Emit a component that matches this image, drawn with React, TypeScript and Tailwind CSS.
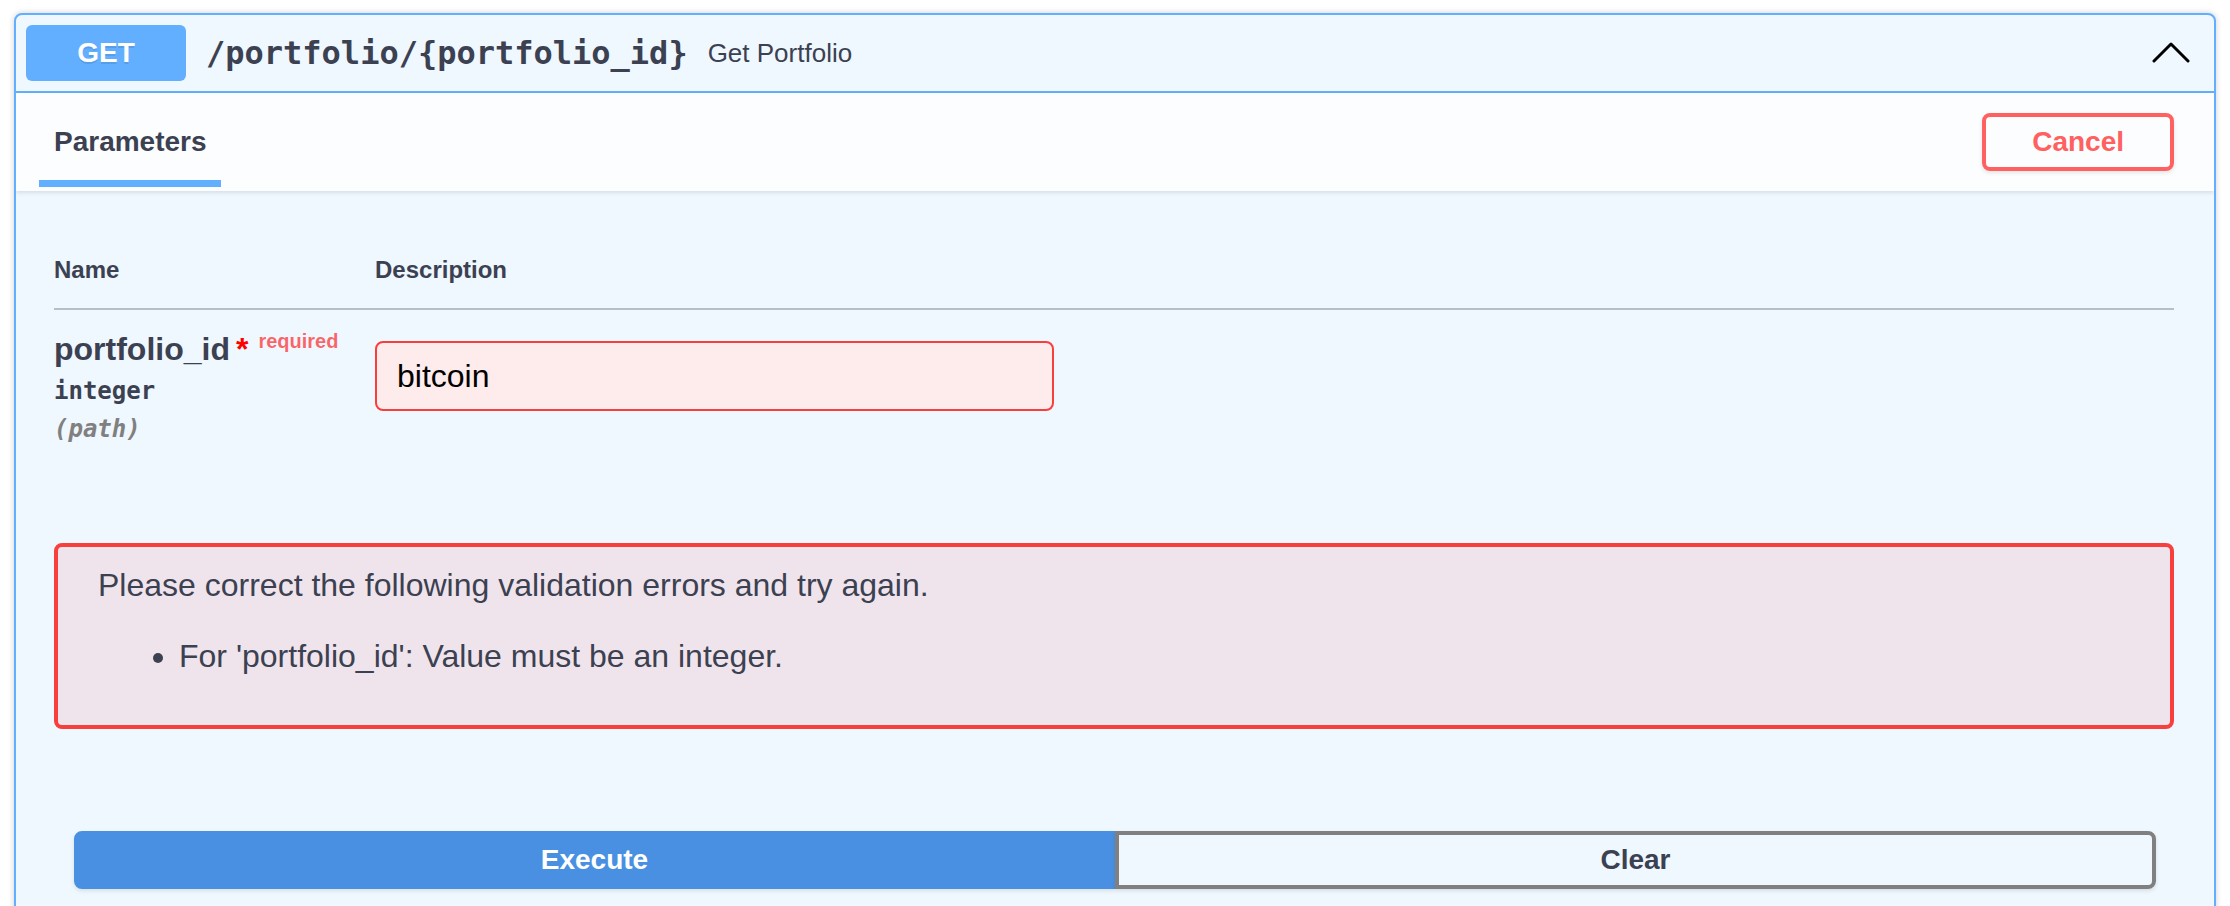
import React from "react";

const sans = { fontFamily: '"Liberation Sans", Arial, sans-serif' };
const mono = { fontFamily: '"DejaVu Sans Mono", "Liberation Mono", monospace' };

function ArrowUp() {
    return (
        <svg width="38" height="22" viewBox="0 0 38 22" aria-hidden="true">
            <polyline
                points="2,19 19,2 36,19"
                fill="none"
                stroke="#000"
                strokeWidth="3"
                strokeLinecap="round"
                strokeLinejoin="round"
            />
        </svg>
    );
}

export default function App() {
    return (
        <div className="min-h-screen bg-white px-[14px] pt-[13px] text-[#3b4151]" style={sans}>
            <div className="overflow-hidden rounded-[8px] border-2 border-[#61affe] bg-[#eff7ff] shadow-[0_0_6px_rgba(0,0,0,0.19)]">
                {/* Summary bar */}
                <div className="flex items-center border-b-2 border-[#61affe] p-[10px]">
                    <span className="flex h-[56px] w-[160px] items-center justify-center rounded-[6px] bg-[#61affe] text-[28px] font-bold text-white [text-shadow:0_2px_0_rgba(0,0,0,0.1)]">
                        GET
                    </span>
                    <span className="px-[20px] text-[32px] font-bold text-[#3b4151]" style={mono}>
                        /portfolio/{"{portfolio_id}"}
                    </span>
                    <span className="flex-1 text-[26px] text-[#3b4151]">Get Portfolio</span>
                    <span className="mr-[14px] flex items-center">
                        <ArrowUp />
                    </span>
                </div>

                {/* Section header */}
                <div className="relative flex h-[98px] items-center justify-between bg-white/80 pl-[38px] pr-[40px] shadow-[0_2px_4px_rgba(0,0,0,0.1)]">
                    <div className="relative flex h-full items-center">
                        <h4 className="text-[28px] font-bold text-[#3b4151]">Parameters</h4>
                        <span className="absolute bottom-[4px] left-[-15px] h-[7px] w-[182px] bg-[#61affe]" />
                    </div>
                    <button className="rounded-[8px] border-4 border-[#ff6060] bg-transparent px-[46px] py-[9px] text-[28px] font-bold leading-[32px] text-[#ff6060] shadow-[0_2px_4px_rgba(0,0,0,0.1)]">
                        Cancel
                    </button>
                </div>

                {/* Parameters table */}
                <div className="pl-[38px] pr-[40px] pt-[43px]">
                    <div className="flex border-b-2 border-[#b8bec8] pb-[24px] pt-[22px] text-[24px] font-bold leading-[28px]">
                        <div className="w-[321px]">Name</div>
                        <div>Description</div>
                    </div>
                    <div className="flex pt-[21px]">
                        <div className="w-[321px]">
                            <div className="text-[32px] font-bold leading-[36px]">
                                portfolio_id
                                <span className="ml-[6px] text-[#ff0000]">*</span>
                                <span className="relative top-[-12px] pl-[10px] text-[20px] font-bold text-[rgba(255,0,0,0.6)]">
                                    required
                                </span>
                            </div>
                            <div className="pb-[10px] pt-[6px] text-[24px] font-bold leading-[28px]" style={mono}>
                                integer
                            </div>
                            <div className="text-[24px] font-bold italic leading-[28px] text-[#808080]" style={mono}>
                                (path)
                            </div>
                        </div>
                        <div className="pt-[10px]">
                            <div className="flex h-[70px] w-[679px] items-center rounded-[8px] border-2 border-[#f93e3e] bg-[#feebeb] px-[20px] text-[32px] text-black">
                                bitcoin
                            </div>
                        </div>
                    </div>

                    {/* Validation errors */}
                    <div className="mt-[100px] rounded-[8px] border-4 border-[#f93e3e] bg-[#f0e4ec] px-[40px] pb-[50px] pt-[20px] text-[32px] leading-[37px]">
                        <h4>Please correct the following validation errors and try again.</h4>
                        <ul className="mt-[34px] list-disc pl-[81px]">
                            <li>For 'portfolio_id': Value must be an integer.</li>
                        </ul>
                    </div>
                </div>

                {/* Execute / Clear */}
                <div className="flex px-[58px] pb-[60px] pt-[102px]">
                    <button className="h-[58px] flex-1 rounded-l-[8px] border-4 border-[#4990e2] bg-[#4990e2] text-[28px] font-bold text-white shadow-[0_2px_4px_rgba(0,0,0,0.1)]">
                        Execute
                    </button>
                    <button className="h-[58px] flex-1 rounded-r-[8px] border-4 border-[#808080] bg-transparent text-[28px] font-bold text-[#3b4151] shadow-[0_2px_4px_rgba(0,0,0,0.1)]">
                        Clear
                    </button>
                </div>
            </div>
        </div>
    );
}
